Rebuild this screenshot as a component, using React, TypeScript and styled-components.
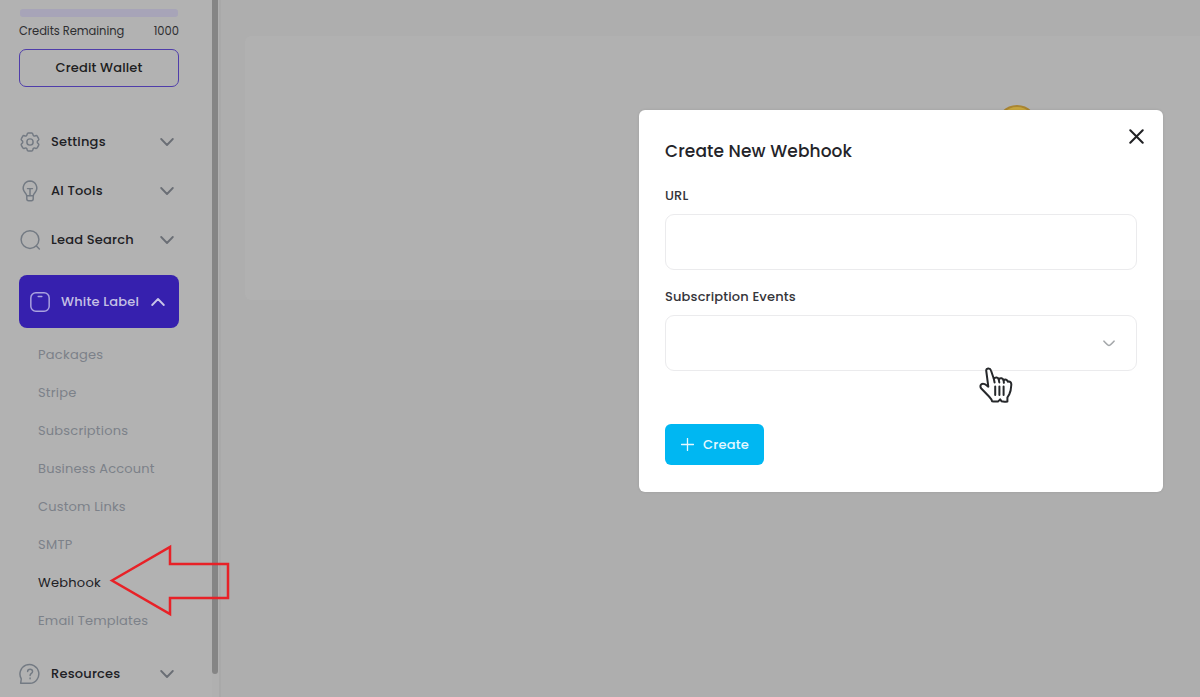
import React from 'react';
import styled, { createGlobalStyle } from 'styled-components';

interface SubItemI {
  label: string;
  spacing: number;
  active?: boolean;
}

const subItems: SubItemI[] = [
  { label: 'Packages', spacing: 0.25 },
  { label: 'Stripe', spacing: 0.2 },
  { label: 'Subscriptions', spacing: 0.2 },
  { label: 'Business Account', spacing: 0.17 },
  { label: 'Custom Links', spacing: 0.17 },
  { label: 'SMTP', spacing: 0.3 },
  { label: 'Webhook', spacing: 0.25, active: true },
  { label: 'Email Templates', spacing: 0.17 },
];

const GearIcon = () => (
  <Icon viewBox="0 0 24 24" $size={22}>
    <path d="M10.2 2.2h3.6c.9 0 1.2.6 1.3 1.3.2 1.7 1.3 2.4 2.9 1.7.8-.3 1.5-.3 2 .6l1.4 2.5c.5.8.2 1.4-.4 1.9-1.5 1.1-1.5 2.5 0 3.6.6.5.9 1.1.4 1.9L20 18.2c-.5.9-1.2.9-2 .6-1.6-.7-2.7 0-2.9 1.7-.1.7-.4 1.3-1.3 1.3h-3.6c-.9 0-1.2-.6-1.3-1.3-.2-1.7-1.3-2.4-2.9-1.7-.8.3-1.5.3-2-.6l-1.4-2.5c-.5-.8-.2-1.4.4-1.9 1.5-1.1 1.5-2.5 0-3.6-.6-.5-.9-1.1-.4-1.9L4 5.8c.5-.9 1.2-.9 2-.6 1.6.7 2.7 0 2.9-1.7.1-.7.4-1.3 1.3-1.3z" />
    <circle cx="12" cy="12" r="3.4" />
  </Icon>
);

const BulbIcon = () => (
  <Icon viewBox="0 0 24 24" $size={22}>
    <path d="M8.5 17.2c-.3-1.6-1.2-2.6-2.2-3.8A7.5 7.5 0 0 1 12 1.2a7.5 7.5 0 0 1 5.7 12.2c-1 1.2-1.9 2.2-2.2 3.8z" />
    <path d="M8.5 17.2v3.2c0 1.4.8 2.2 2 2.2h3c1.2 0 2-.8 2-2.2v-3.2M9.3 9.4h5.4M12 9.4v7.6" />
  </Icon>
);

const SearchIcon = () => (
  <Icon viewBox="0 0 24 24" $size={22}>
    <circle cx="12" cy="11.5" r="9.7" />
    <path d="M19 18.6l3.2 3.2" />
  </Icon>
);

const HelpIcon = () => (
  <Icon viewBox="0 0 24 24" $size={22}>
    <path d="M1.8 22.2l.7-5A10.3 10.3 0 1 1 12 22.2z" />
    <path d="M9.4 9.3c0-1.6 1.1-2.6 2.7-2.6s2.7 1 2.7 2.5c0 2.1-2.7 2.1-2.7 4.5M12.1 16.4v.9" />
  </Icon>
);

const Chevron = ({ up }: { up?: boolean }) => (
  <ChevronSvg viewBox="0 0 14 8" $up={up}>
    <path d="M1.2 1l5.8 6 5.8-6" />
  </ChevronSvg>
);

const menu = [
  { label: 'Settings', spacing: 0.2, icon: <GearIcon /> },
  { label: 'AI Tools', spacing: 0.2, icon: <BulbIcon /> },
  { label: 'Lead Search', spacing: 0.2, icon: <SearchIcon /> },
];

const App = () => {
  return (
    <Page>
      <GlobalStyle />
      <Sidebar>
        <CreditBar />
        <CreditRow>
          <Text $spacing={-0.05}>Credits Remaining</Text>
          <Text $spacing={0}>1000</Text>
        </CreditRow>
        <WalletButton>Credit Wallet</WalletButton>
        <Menu>
          {menu.map((item) => (
            <MenuItem key={item.label}>
              {item.icon}
              <MenuLabel $spacing={item.spacing}>{item.label}</MenuLabel>
              <Chevron />
            </MenuItem>
          ))}
        </Menu>
        <ActiveItem>
          <Icon viewBox="0 0 24 24" $size={22}>
            <rect x="2" y="2" width="20" height="20" rx="5.5" />
            <path d="M10 6h4" />
          </Icon>
          <MenuLabel $spacing={0.2}>White Label</MenuLabel>
          <Chevron up />
        </ActiveItem>
        <SubMenu>
          {subItems.map((item) => (
            <SubItem
              key={item.label}
              $active={item.active}
              $spacing={item.spacing}
            >
              {item.label}
            </SubItem>
          ))}
        </SubMenu>
        <MenuItem>
          <HelpIcon />
          <MenuLabel $spacing={0.2}>Resources</MenuLabel>
          <Chevron />
        </MenuItem>
      </Sidebar>
      <ScrollTrack>
        <ScrollThumb />
      </ScrollTrack>
      <Main>
        <Card />
      </Main>

      <Coin />
      <Modal>
        <ModalHeader>
          <Title>Create New Webhook</Title>
          <CloseIcon viewBox="0 0 14 14">
            <path d="M1.2 1.2l11.6 11.6M12.8 1.2L1.2 12.8" />
          </CloseIcon>
        </ModalHeader>
        <FieldLabel $spacing={0.1}>URL</FieldLabel>
        <Field />
        <FieldLabel $spacing={0.15}>Subscription Events</FieldLabel>
        <Field>
          <SelectArrow viewBox="0 0 12 7">
            <path d="M1 1.2q4 4.3 5 4.3t5-4.3" />
          </SelectArrow>
        </Field>
        <CreateButton>
          <PlusIcon viewBox="0 0 14 14">
            <path d="M7 .5v13M.5 7h13" />
          </PlusIcon>
          Create
        </CreateButton>
      </Modal>

      <Pointer viewBox="0 0 34 36">
        <path d="M7.2 3.5C7.5 1 11.2.8 12 3.5l2.8 8.2c1.6-2 4.2-1.6 4.9.5 1.8-1.7 4.3-1 4.9 1 1.6-1.2 3.7-.5 4.3 1.5 2.4-.6 3.6.8 3.4 3.3-.2 3.6-.6 6.5-2 9.3l-1.9 3.3v3.9c-2 .3-4 .4-5.9-.2l-1.3-1.9-2 2c-2 .2-4.2.3-6.1-.1-.3-2-1.8-3.4-3.3-5L2.3 21.5c-1.8-2.2-.5-5 2-4.8 2 .1 3.5 1.7 5 3z" />
        <path d="M14.8 11.7l.8 3.8M19.7 12.2l.6 3.2M24.6 13.2l.3 2.6M16.2 19.5v8.5M20.4 19.5v8.5M24.6 19.5v8.5" />
      </Pointer>
      <Arrow viewBox="0 0 122 74">
        <path d="M3 36.5L61 3v17h58v34H61v16z" />
      </Arrow>
    </Page>
  );
};

const GlobalStyle = createGlobalStyle`
  body {
    margin: 0;
    font-family: Poppins, Inter, sans-serif;
    background: #aeaeae;
  }

  * {
    box-sizing: border-box;
  }
`;

const Page = styled.div`
  position: relative;
  width: 1200px;
  height: 697px;

  display: flex;
  overflow: hidden;

  background: #aeaeae;
`;

const Sidebar = styled.aside`
  width: 212px;
  padding: 9px 33px 0 19px;

  display: flex;
  flex-direction: column;
  flex-shrink: 0;

  background: #b2b2b2;
`;

const CreditBar = styled.div`
  height: 8px;
  margin: 0 1px;
  flex-shrink: 0;

  border-radius: 3px;
  background: #a7a4b8;
`;

const CreditRow = styled.div`
  height: 28px;
  padding-top: 1px;
  flex-shrink: 0;

  display: flex;
  justify-content: space-between;
  align-items: center;

  color: #2e2e31;
  font-size: 11.5px;
`;

const Text = styled.span<{ $spacing: number }>`
  letter-spacing: ${({ $spacing }) => $spacing}px;
  white-space: nowrap;
`;

const WalletButton = styled.button`
  width: 160px;
  height: 38px;
  margin: 4px 0 30px;
  flex-shrink: 0;

  border: 1px solid #4f3daa;
  border-radius: 7px;

  background: transparent;
  color: #1d1d20;
  font-family: inherit;
  font-size: 13px;
  font-weight: 500;
  letter-spacing: 0.15px;
`;

const Menu = styled.nav`
  height: 158px;
  flex-shrink: 0;
`;

const MenuItem = styled.div`
  height: 49.3px;
  padding-right: 5px;
  flex-shrink: 0;

  display: flex;
  align-items: center;

  color: #202024;
`;

const Icon = styled.svg<{ $size: number }>`
  width: ${({ $size }) => $size}px;
  height: ${({ $size }) => $size}px;
  flex-shrink: 0;

  fill: none;
  stroke: #737a83;
  stroke-width: 1.6;
  stroke-linecap: round;
  stroke-linejoin: round;
`;

const MenuLabel = styled(Text)`
  margin-left: 10px;
  flex: 1;

  font-size: 13px;
  font-weight: 500;
`;

const ChevronSvg = styled.svg<{ $up?: boolean }>`
  width: 14px;
  height: 8px;

  fill: none;
  stroke: ${({ $up }) => ($up ? '#c9c5e8' : '#6a6e75')};
  stroke-width: 1.8;
  stroke-linecap: round;
  stroke-linejoin: round;
  transform: ${({ $up }) => ($up ? 'rotate(180deg)' : 'none')};
`;

const ActiveItem = styled.div`
  width: 160px;
  height: 53px;
  padding: 0 14px 0 10px;
  flex-shrink: 0;

  display: flex;
  align-items: center;

  border-radius: 8px;

  background: #3620ae;
  color: #c5c0e5;

  ${Icon} {
    stroke: #aaa2df;
  }
`;

const SubMenu = styled.div`
  padding: 8px 0 9px 19px;
  flex-shrink: 0;
`;

const SubItem = styled.div<{ $active?: boolean; $spacing: number }>`
  height: 38px;

  color: ${({ $active }) => ($active ? '#202024' : '#7c8189')};
  font-size: 13px;
  line-height: 38px;
  letter-spacing: ${({ $spacing }) => $spacing}px;
  white-space: nowrap;
`;

const ScrollTrack = styled.div`
  width: 9px;
  flex-shrink: 0;

  border-right: 2px solid #a9a9a9;
  background: #b0b0b0;
`;

const ScrollThumb = styled.div`
  width: 6px;
  height: 674px;

  border-radius: 0 0 3px 3px;
  background: #858585;
`;

const Main = styled.main`
  padding: 36px 0 0 24px;
  flex: 1;
`;

const Card = styled.section`
  height: 264px;

  border-radius: 6px 0 0 6px;
  background: #b1b1b1;
`;

const Coin = styled.div`
  position: absolute;
  top: 105px;
  left: 996px;
  width: 42px;
  height: 42px;

  border: 2px solid #a98532;
  border-radius: 50%;
  background: #c8a63e;
`;

const Modal = styled.div`
  position: absolute;
  top: 110px;
  left: 639px;
  width: 524px;
  height: 382px;
  padding: 19px 26px 0;

  border-radius: 6px;
  background: #ffffff;
  box-shadow: 0 0 3px rgba(0, 0, 0, 0.1);
`;

const ModalHeader = styled.div`
  height: 54px;
  margin-right: -7px;

  display: flex;
  justify-content: space-between;
  align-items: flex-start;
`;

const Title = styled.h2`
  margin: 10px 0 0;

  color: #242429;
  font-size: 17px;
  font-weight: 500;
  line-height: 24px;
  letter-spacing: 0.1px;
`;

const CloseIcon = styled.svg`
  width: 15px;
  height: 15px;

  fill: none;
  stroke: #202124;
  stroke-width: 1.9;
  stroke-linecap: round;
`;

const FieldLabel = styled.label<{ $spacing: number }>`
  height: 25px;

  display: block;

  color: #35353a;
  font-size: 13px;
  font-weight: 500;
  line-height: 25px;
  letter-spacing: ${({ $spacing }) => $spacing}px;
`;

const Field = styled.div`
  height: 56px;
  margin: 6px 0 14px;
  padding-right: 21px;

  display: flex;
  justify-content: flex-end;
  align-items: center;

  border: 1px solid #ebebed;
  border-radius: 9px;
`;

const SelectArrow = styled.svg`
  width: 12px;
  height: 7px;

  fill: none;
  stroke: #a5a8ab;
  stroke-width: 1.6;
  stroke-linecap: round;
`;

const CreateButton = styled.button`
  width: 99px;
  height: 41px;
  margin-top: 53px;
  padding: 0 0 0 16px;

  display: flex;
  align-items: center;
  gap: 9px;

  border: none;
  border-radius: 6px;

  background: #00b7f2;
  color: #e5f8ff;
  font-family: inherit;
  font-size: 13px;
  font-weight: 500;
  letter-spacing: 0.2px;
`;

const PlusIcon = styled.svg`
  width: 13px;
  height: 13px;

  stroke: #e5f8ff;
  stroke-width: 1.4;
  stroke-linecap: round;
`;

const Pointer = styled.svg`
  position: absolute;
  top: 367px;
  left: 979px;
  width: 34px;
  height: 36px;

  fill: #ffffff;
  stroke: #26282b;
  stroke-width: 2;
  stroke-linecap: round;
  stroke-linejoin: round;
`;

const Arrow = styled.svg`
  position: absolute;
  top: 544px;
  left: 109px;
  width: 122px;
  height: 74px;

  fill: none;
  stroke: #e82127;
  stroke-width: 2.5;
`;

export default App;
